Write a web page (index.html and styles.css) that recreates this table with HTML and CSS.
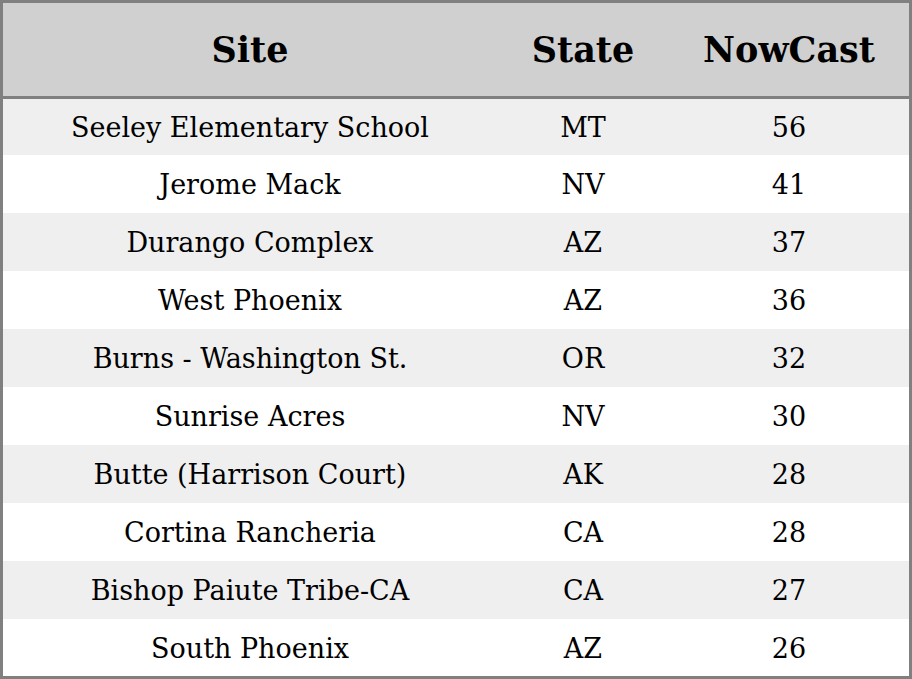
FILE: index.html
```html
<!DOCTYPE html>
<html>
<head>
<meta charset="utf-8">
<link rel="stylesheet" href="styles.css">
</head>
<body>
<table class="aq">
  <colgroup>
    <col class="c-site">
    <col class="c-state">
    <col class="c-now">
  </colgroup>
  <thead>
    <tr><th>Site</th><th>State</th><th>NowCast</th></tr>
  </thead>
  <tbody>
    <tr><td>Seeley Elementary School</td><td>MT</td><td>56</td></tr>
    <tr><td>Jerome Mack</td><td>NV</td><td>41</td></tr>
    <tr><td>Durango Complex</td><td>AZ</td><td>37</td></tr>
    <tr><td>West Phoenix</td><td>AZ</td><td>36</td></tr>
    <tr><td>Burns - Washington St.</td><td>OR</td><td>32</td></tr>
    <tr><td>Sunrise Acres</td><td>NV</td><td>30</td></tr>
    <tr><td>Butte (Harrison Court)</td><td>AK</td><td>28</td></tr>
    <tr><td>Cortina Rancheria</td><td>CA</td><td>28</td></tr>
    <tr><td>Bishop Paiute Tribe-CA</td><td>CA</td><td>27</td></tr>
    <tr><td>South Phoenix</td><td>AZ</td><td>26</td></tr>
  </tbody>
</table>
</body>
</html>
```
FILE: styles.css
```css
html, body {
  margin: 0;
  padding: 0;
  background: #ffffff;
}
.aq {
  width: 912px;
  height: 679px;
  border-collapse: separate;
  border-spacing: 0;
  table-layout: fixed;
  border: 3px solid #808080;
  font-family: "DejaVu Serif", serif;
  color: #000;
}
.c-site { width: 494px; }
.c-state { width: 172px; }
.c-now { width: 240px; }
.aq th {
  height: 93px;
  padding: 0;
  background: #d0d0d0;
  border-bottom: 3px solid #808080;
  font-size: 35px;
  font-weight: bold;
  line-height: 1;
  text-align: center;
  vertical-align: middle;
}
.aq td {
  height: 57px;
  padding: 1px 0 0 0;
  font-size: 27px;
  line-height: 1;
  text-align: center;
  vertical-align: middle;
}
.aq tbody tr:first-child td {
  height: 55px;
}
.aq tbody tr:last-child td {
  height: 56px;
}
.aq tbody tr:nth-child(odd) td {
  background: #efefef;
}
.aq tbody tr:nth-child(even) td {
  background: #ffffff;
}
```
